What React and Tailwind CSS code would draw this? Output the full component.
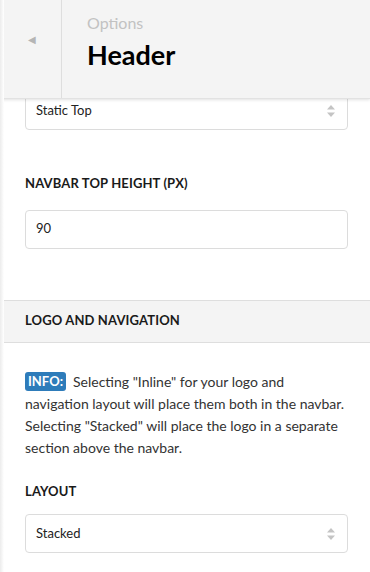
import React from 'react';

const Chevrons = () => (
  <svg width="10" height="14" viewBox="0 0 10 14" className="shrink-0">
    <path d="M5 1 L9 5.5 H1 Z" fill="#c4c4c4" />
    <path d="M5 13 L9 8.5 H1 Z" fill="#c4c4c4" />
  </svg>
);

const SelectBox = ({ value, className = '' }) => (
  <div
    className={`flex items-center justify-between h-[39px] px-[10px] pr-[11px] border border-[#dcdcdc] rounded-[4px] bg-white text-[13px] text-[#222] ${className}`}
  >
    <span>{value}</span>
    <Chevrons />
  </div>
);

const Label = ({ children }) => (
  <div className="text-[13px] font-bold uppercase text-[#1a1a1a] tracking-[0.01em]">{children}</div>
);

export default function App() {
  return (
    <div
      className="relative w-[370px] h-[572px] overflow-hidden bg-white"
      style={{ fontFamily: 'Lato, "Noto Sans", sans-serif' }}
    >
      {/* left edge shade */}
      <div className="absolute left-0 top-0 bottom-0 w-[4px] bg-gradient-to-r from-[#ececec] to-white z-20" />

      {/* Header */}
      <div className="relative z-10 flex h-[99px] bg-[#f4f4f4] shadow-[0_1px_3px_rgba(0,0,0,0.12)] border-b border-[#e2e2e2]">
        <div className="w-[62px] flex items-center justify-center border-r border-[#dedede]">
          <span className="text-[#b5b5b5] text-[10px] ml-[2px] mt-[-20px]">◀</span>
        </div>
        <div className="pl-[25px] pt-[12px]">
          <div className="text-[16px] text-[#c2c2c2] leading-[22px]">Options</div>
          <div className="text-[27px] font-bold text-black leading-[34px] mt-[4px]">Header</div>
        </div>
      </div>

      {/* Content */}
      <div className="relative">
        <div className="pl-[25px] pr-[22px] mt-[-8px]">
          <SelectBox value="Static Top" />
        </div>

        <div className="pl-[25px] pr-[22px] pt-[44px] pb-[51px]">
          <Label>Navbar Top Height (px)</Label>
          <div className="mt-[16px] h-[39px] flex items-center px-[10px] border border-[#dcdcdc] rounded-[4px] text-[13px] text-[#222]">
            90
          </div>
        </div>

        <div className="h-[43px] flex items-center px-[25px] bg-[#f4f4f4] border-y border-[#dedede]">
          <Label>Logo and Navigation</Label>
        </div>

        <div className="pl-[25px] pr-[22px] pt-[28px]">
          <p className="text-[14px] leading-[22px] text-[#333]">
            <span className="inline-block align-[1px] bg-[#2e7cba] text-white text-[13px] font-bold rounded-[3px] px-[3px] leading-[19px] mr-[7px]">
              INFO:
            </span>
            Selecting "Inline" for your logo and navigation layout will place them both in the navbar. Selecting "Stacked" will place the logo in a separate section above the navbar.
          </p>

          <div className="mt-[23px]">
            <Label>Layout</Label>
          </div>
          <SelectBox value="Stacked" className="mt-[13px]" />
        </div>
      </div>
    </div>
  );
}
